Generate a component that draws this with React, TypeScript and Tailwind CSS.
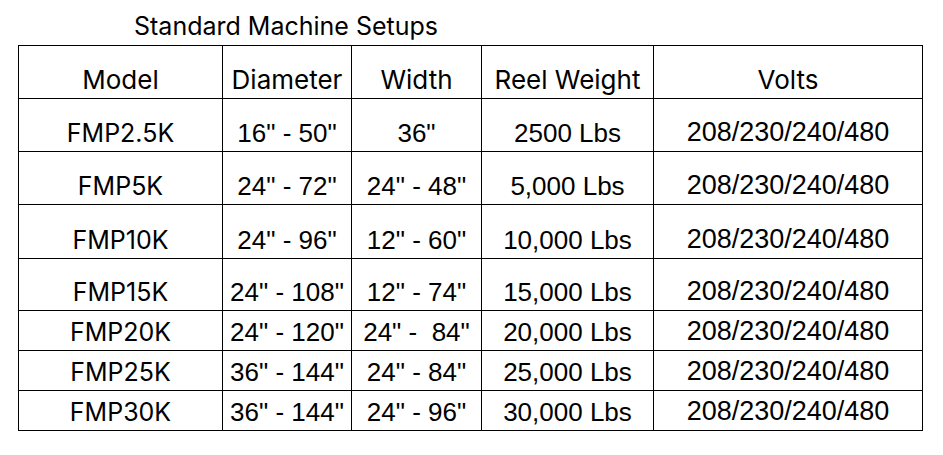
import React from "react";

const aptos = { fontFamily: "Inter, 'Noto Sans', sans-serif" };

type Row = { model: string; dia: string; width: string; weight: string; volts: string; h: string };

const rows: Row[] = [
  { model: "FMP2.5K", dia: '16" - 50"', width: '36"', weight: "2500 Lbs", volts: "208/230/240/480", h: "h-[53px]" },
  { model: "FMP5K", dia: '24" - 72"', width: '24" - 48"', weight: "5,000 Lbs", volts: "208/230/240/480", h: "h-[53px]" },
  { model: "FMP10K", dia: '24" - 96"', width: '12" - 60"', weight: "10,000 Lbs", volts: "208/230/240/480", h: "h-[54px]" },
  { model: "FMP15K", dia: '24" - 108"', width: '12" - 74"', weight: "15,000 Lbs", volts: "208/230/240/480", h: "h-[52px]" },
  { model: "FMP20K", dia: '24" - 120"', width: '24" -  84"', weight: "20,000 Lbs", volts: "208/230/240/480", h: "h-[40px]" },
  { model: "FMP25K", dia: '36" - 144"', width: '24" - 84"', weight: "25,000 Lbs", volts: "208/230/240/480", h: "h-[40px]" },
  { model: "FMP30K", dia: '36" - 144"', width: '24" - 96"', weight: "30,000 Lbs", volts: "208/230/240/480", h: "h-[40px]" },
];

function Cell({
  children,
  w,
  h,
  font,
}: {
  children: React.ReactNode;
  w: string;
  h: string;
  font: "head" | "model" | "arial" | "volts";
}) {
  const size =
    font === "head"
      ? "text-[26px]"
      : font === "model"
      ? "text-[25px]"
      : font === "volts"
      ? "text-[27px] font-['Liberation_Sans',Arial,sans-serif]"
      : "text-[26px] font-['Liberation_Sans',Arial,sans-serif]";
  const isAptos = font === "head" || font === "model";
  return (
    <div
      className={`${w} ${h} flex items-end justify-center border-l border-t border-black pb-[5px] whitespace-pre leading-none text-black ${size}`}
      style={isAptos ? aptos : undefined}
    >
      {children}
    </div>
  );
}

export default function App() {
  return (
    <div className="w-[943px] h-[455px] bg-white">
      <div className="h-[45px] flex items-end pl-[134px] pb-[6px] text-[25px] leading-none text-black" style={aptos}>
        Standard Machine Setups
      </div>
      <div className="ml-[18px] w-[905px] border-r border-b border-black flex flex-col">
        <div className="flex">
          <Cell w="w-[204px]" h="h-[53px]" font="head">Model</Cell>
          <Cell w="w-[129px]" h="h-[53px]" font="head">Diameter</Cell>
          <Cell w="w-[130px]" h="h-[53px]" font="head">Width</Cell>
          <Cell w="w-[172px]" h="h-[53px]" font="head">Reel Weight</Cell>
          <Cell w="w-[269px]" h="h-[53px]" font="head">Volts</Cell>
        </div>
        {rows.map((r) => (
          <div className="flex" key={r.model}>
            <Cell w="w-[204px]" h={r.h} font="model">{r.model}</Cell>
            <Cell w="w-[129px]" h={r.h} font="arial">{r.dia}</Cell>
            <Cell w="w-[130px]" h={r.h} font="arial">{r.width}</Cell>
            <Cell w="w-[172px]" h={r.h} font="arial">{r.weight}</Cell>
            <Cell w="w-[269px]" h={r.h} font="volts">{r.volts}</Cell>
          </div>
        ))}
      </div>
    </div>
  );
}
